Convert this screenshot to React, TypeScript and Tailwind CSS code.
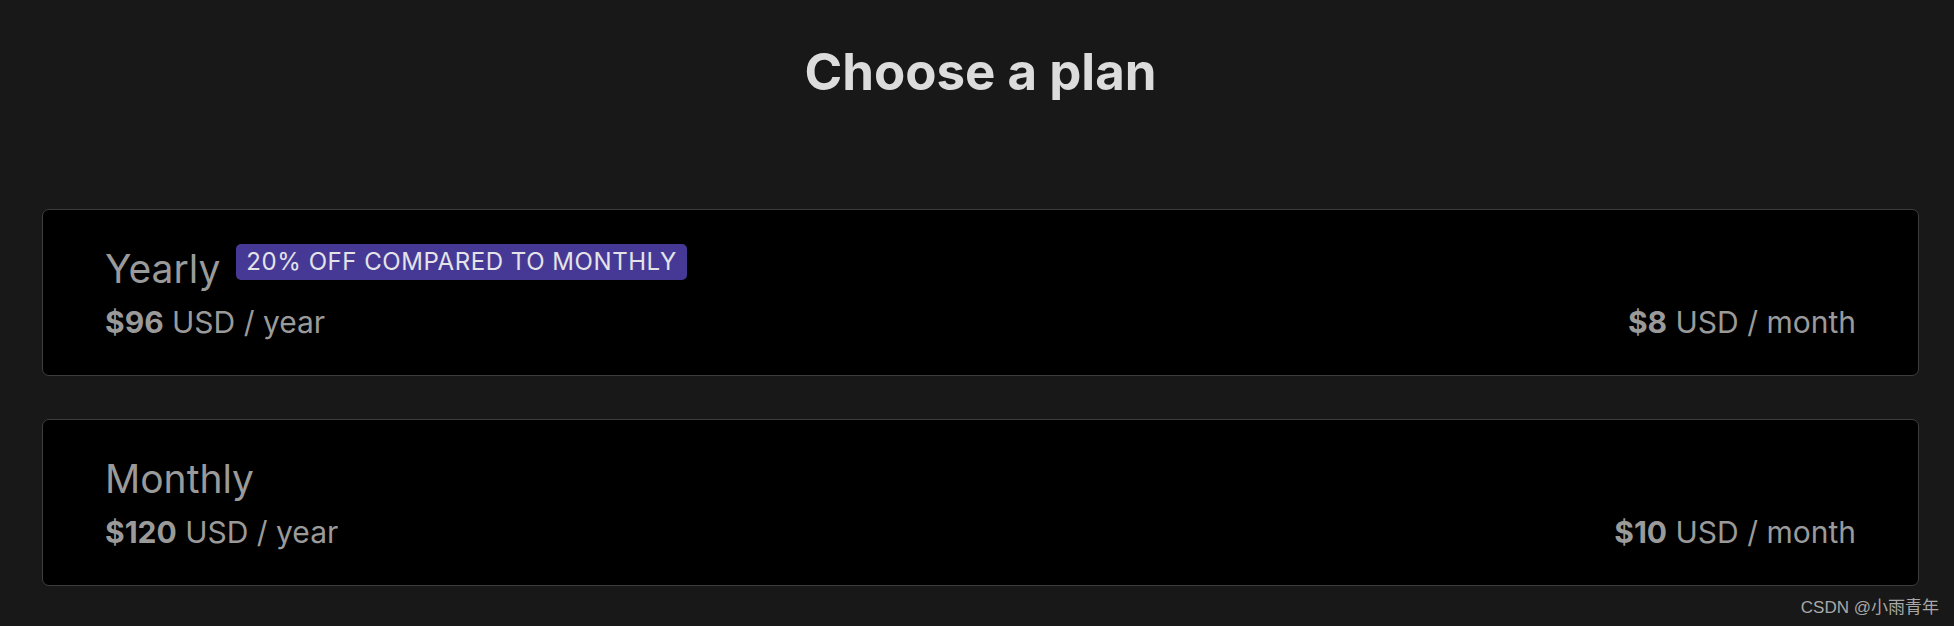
import React from "react";

const font = { fontFamily: "Inter, 'Noto Sans', sans-serif" };

function Price({ amount, unit }: { amount: string; unit: string }) {
  return (
    <div className="text-[30px] leading-[36px] text-[#9a9a9a]">
      <span className="font-bold">{amount}</span> USD / {unit}
    </div>
  );
}

function PlanCard({
  name,
  badge,
  yearAmount,
  monthAmount,
}: {
  name: string;
  badge?: string;
  yearAmount: string;
  monthAmount: string;
}) {
  return (
    <div className="flex flex-col gap-[11px] rounded-[7px] border border-[#3d3d3d] bg-black px-[62px] pt-[35px] pb-[35px]">
      <div className="flex items-start gap-[16px]">
        <div className="text-[39px] leading-[48px] text-[#9a9a9a]">{name}</div>
        {badge && (
          <div className="rounded-[5px] bg-[#463996] px-[10px] text-[24px] leading-[36px] tracking-[0.55px] text-[#e4e4e8] -mt-[1px]">
            {badge}
          </div>
        )}
      </div>
      <div className="flex items-center justify-between">
        <Price amount={yearAmount} unit="year" />
        <Price amount={monthAmount} unit="month" />
      </div>
    </div>
  );
}

export default function App() {
  return (
    <div className="h-[626px] w-full bg-[#181818]" style={font}>
      <div className="flex flex-col pl-[42px] pr-[35px]">
        <h1 className="pt-[40px] text-center text-[51px] font-bold leading-[64px] text-[#dcdcdd]">
          Choose a plan
        </h1>
        <div className="mt-[105px] flex flex-col gap-[43px]">
          <PlanCard
            name="Yearly"
            badge="20% OFF COMPARED TO MONTHLY"
            yearAmount="$96"
            monthAmount="$8"
          />
          <PlanCard name="Monthly" yearAmount="$120" monthAmount="$10" />
        </div>
        <div
          className="mt-[12px] flex justify-end text-[17px] leading-[20px] text-[#a8a8a8]"
          style={{ fontFamily: "'Liberation Sans', 'Noto Sans CJK SC', sans-serif" }}
        >
          <span className="mr-[-20px]">CSDN @小雨青年</span>
        </div>
      </div>
    </div>
  );
}
